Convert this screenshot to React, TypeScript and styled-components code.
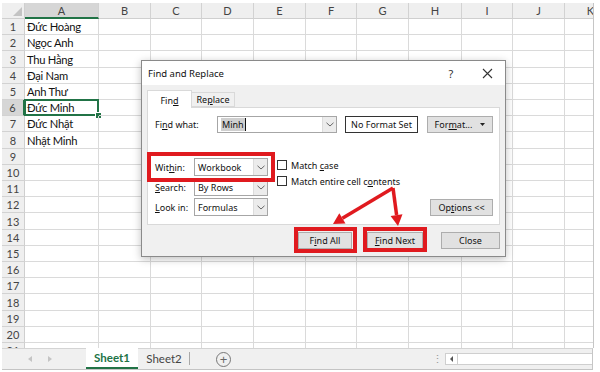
import React from "react";
import styled, { createGlobalStyle } from "styled-components";

const Global = createGlobalStyle`
  html, body { margin: 0; padding: 0; background: #fff; }
  body { font-family: "Lato", "Liberation Sans", sans-serif; }
  #root { width: 600px; height: 372px; }
`;

const COLS = [
  { l: "A", w: 74 }, { l: "B", w: 52 }, { l: "C", w: 51 }, { l: "D", w: 52 },
  { l: "E", w: 52 }, { l: "F", w: 51 }, { l: "G", w: 52 }, { l: "H", w: 53 },
  { l: "I", w: 51 }, { l: "J", w: 52 }, { l: "K", w: 52 },
];
const NAMES = ["Đức Hoàng", "Ngọc Anh", "Thu Hằng", "Đại Nam", "Anh Thư", "Đức Minh", "Đức Nhật", "Nhật Minh"];
const ROWS = 21;
const ACTIVE_ROW = 6;
const rowHeights = Array.from({ length: ROWS }, (_, i) =>
  Math.round(19 + 16.2 * (i + 1)) - Math.round(19 + 16.2 * i)
);

const RED = "#e01a1f";
const GREEN = "#217346";
const DFONT = `"Noto Sans", "Liberation Sans", sans-serif`;

const Page = styled.div`
  position: relative;
  width: 600px;
  height: 372px;
  overflow: hidden;
  background: #fff;
  display: flex;
  flex-direction: column;
`;

const SheetArea = styled.div`
  margin: 3px 0 0 2px;
  width: 591px;
  height: 345px;
  overflow: hidden;
  border-right: 1px solid #c6c6c6;
`;

const Grid = styled.div<{ $cols: string; $rows: string }>`
  display: grid;
  grid-template-columns: ${(p) => p.$cols};
  grid-template-rows: ${(p) => p.$rows};
  width: max-content;
`;

const Corner = styled.div`
  position: relative;
  background: #efefef;
  border-right: 1px solid #cfcfcf;
  border-bottom: 1px solid #cfcfcf;
  box-sizing: border-box;
  &::after {
    content: "";
    position: absolute;
    right: 2px;
    bottom: 2px;
    border-left: 9px solid transparent;
    border-bottom: 9px solid #c3c3c3;
  }
`;

const ColHead = styled.div<{ $sel?: boolean }>`
  box-sizing: border-box;
  background: ${(p) => (p.$sel ? "#d6d6d6" : "#efefef")};
  border-right: 1px solid #d2d2d2;
  border-bottom: ${(p) => (p.$sel ? `2px solid ${GREEN}` : "1px solid #cfcfcf")};
  color: #444;
  font-size: 11px;
  display: flex;
  align-items: center;
  justify-content: center;
  white-space: nowrap;
`;

const RowHead = styled.div<{ $sel?: boolean }>`
  box-sizing: border-box;
  background: ${(p) => (p.$sel ? "#d6d6d6" : "#efefef")};
  border-right: ${(p) => (p.$sel ? `2px solid ${GREEN}` : "1px solid #cfcfcf")};
  border-bottom: 1px solid #d2d2d2;
  color: #444;
  font-size: 11px;
  display: flex;
  align-items: center;
  justify-content: center;
`;

const Cell = styled.div<{ $active?: boolean }>`
  position: relative;
  box-sizing: border-box;
  border-right: 1px solid #dadada;
  border-bottom: 1px solid #dadada;
  color: #111;
  font-size: 11.2px;
  letter-spacing: -0.25px;
  padding-left: 2px;
  display: flex;
  align-items: center;
  white-space: nowrap;
  ${(p) =>
    p.$active
      ? `
    &::before {
      content: "";
      position: absolute;
      left: -1px; top: -1px; right: -1px; bottom: -1px;
      border: 2px solid ${GREEN};
    }
    &::after {
      content: "";
      position: absolute;
      right: -4px; bottom: -4px;
      width: 5px; height: 5px;
      background: ${GREEN};
      border: 1px solid #fff;
    }
  `
      : ""}
`;

const TabBar = styled.div`
  margin-left: 2px;
  width: 591px;
  height: 22px;
  box-sizing: border-box;
  background: #f0f0f0;
  border-top: 1px solid #d4d4d4;
  border-bottom: 1px solid #c4c4c4;
  border-right: 1px solid #c6c6c6;
  display: flex;
  align-items: stretch;
  font-family: "Lato", "Liberation Sans", sans-serif;
`;

const NavArea = styled.div`
  width: 84px;
  display: flex;
  align-items: center;
  gap: 16px;
  padding-left: 26px;
  box-sizing: border-box;
`;

const NavArrow = styled.span<{ $dir: "l" | "r" }>`
  width: 0;
  height: 0;
  border-top: 3px solid transparent;
  border-bottom: 3px solid transparent;
  ${(p) => (p.$dir === "l" ? "border-right: 4px solid #c4c4c4;" : "border-left: 4px solid #c4c4c4;")}
`;

const SheetTab = styled.div<{ $active?: boolean; $sep?: boolean }>`
  width: 52px;
  box-sizing: border-box;
  display: flex;
  align-items: center;
  justify-content: center;
  font-size: 11.5px;
  margin-top: -1px;
  color: ${(p) => (p.$active ? GREEN : "#444")};
  font-weight: ${(p) => (p.$active ? 700 : 400)};
  background: ${(p) => (p.$active ? "#fff" : "transparent")};
  border-bottom: ${(p) => (p.$active ? `2px solid ${GREEN}` : "none")};
  position: relative;
  ${(p) =>
    p.$sep
      ? `&::after { content: ""; position: absolute; right: 0; top: 4px; bottom: 4px; border-right: 1px solid #a8a8a8; }`
      : ""}
`;

const AddSheet = styled.div`
  margin: 3px 0 0 26px;
  width: 13px;
  height: 13px;
  border: 1px solid #777;
  border-radius: 50%;
  color: #666;
  font-size: 13px;
  line-height: 13px;
  text-align: center;
  font-family: "Liberation Sans", sans-serif;
`;

const Spacer = styled.div`
  flex: 1;
`;

const Dots = styled.div`
  width: 6px;
  color: #999;
  font-size: 11px;
  display: flex;
  align-items: center;
  margin-right: 7px;
`;

const ScrollTrack = styled.div`
  align-self: center;
  width: 147px;
  height: 12px;
  box-sizing: border-box;
  background: #fff;
  border: 1px solid #cfcfcf;
  border-right: none;
  display: flex;
`;

const ScrollBtn = styled.div`
  width: 11px;
  border-right: 1px solid #cfcfcf;
  display: flex;
  align-items: center;
  justify-content: center;
  &::before {
    content: "";
    border-top: 3px solid transparent;
    border-bottom: 3px solid transparent;
    border-right: 3px solid #555;
  }
`;

/* ---------- Dialog ---------- */

const Dialog = styled.div`
  position: absolute;
  left: 141px;
  top: 60px;
  width: 365px;
  height: 197px;
  box-sizing: border-box;
  border: 1px solid #8a8a8a;
  background: #f0f0f0;
  box-shadow: 0 2px 8px rgba(0, 0, 0, 0.25);
  font-family: ${DFONT};
  font-size: 9px;
  color: #111;
  display: flex;
  flex-direction: column;
`;

const TitleBar = styled.div`
  height: 24px;
  background: #fff;
  display: flex;
  align-items: center;
  padding: 0 11px 0 6px;
  font-size: 9.5px;
`;

const TitleText = styled.div`
  flex: 1;
  color: #111;
`;

const HelpBtn = styled.div`
  width: 10px;
  text-align: center;
  font-size: 11px;
  color: #333;
  margin-right: 24px;
`;

const CloseX = styled.div`
  width: 14px;
  height: 14px;
  display: flex;
  align-items: center;
  justify-content: center;
`;

const Body = styled.div`
  padding: 5px 5px 0 5px;
  display: flex;
  flex-direction: column;
`;

const Tabs = styled.div`
  display: flex;
  align-items: flex-end;
  height: 18px;
  margin-bottom: -1px;
  position: relative;
  z-index: 1;
`;

const Tab = styled.div<{ $active?: boolean }>`
  box-sizing: border-box;
  height: ${(p) => (p.$active ? "18px" : "15px")};
  width: ${(p) => (p.$active ? "45px" : "43px")};
  margin-bottom: ${(p) => (p.$active ? "0" : "1px")};
  background: ${(p) => (p.$active ? "#fff" : "#f0f0f0")};
  border: 1px solid #d9d9d9;
  border-bottom: ${(p) => (p.$active ? "none" : "1px solid #d9d9d9")};
  ${(p) => (p.$active ? "" : "border-left: none;")}
  display: flex;
  align-items: center;
  justify-content: center;
  padding-top: ${(p) => (p.$active ? "1px" : "0")};
`;

const Panel = styled.div`
  background: #fff;
  border: 1px solid #d9d9d9;
  padding: 8px 6px 8px 7px;
  display: flex;
  flex-direction: column;
`;

const FindRow = styled.div`
  display: flex;
  align-items: center;
  height: 16px;
`;

const Label = styled.div<{ $w: number }>`
  width: ${(p) => p.$w}px;
  flex: none;
  white-space: nowrap;
`;

const Combo = styled.div<{ $w: number; $h: number }>`
  width: ${(p) => p.$w}px;
  height: ${(p) => p.$h}px;
  box-sizing: border-box;
  flex: none;
  border: 1px solid #a6a6a6;
  background: #fff;
  display: flex;
  align-items: stretch;
`;

const ComboText = styled.div`
  flex: 1;
  display: flex;
  align-items: center;
  padding-left: 3px;
  white-space: nowrap;
`;

const Selected = styled.span`
  background: #cfcfcf;
  padding: 0 1px;
  border-right: 1px solid #111;
`;

const DropBtn = styled.div`
  width: 13px;
  background: #ececec;
  border-left: 1px solid #dcdcdc;
  display: flex;
  align-items: center;
  justify-content: center;
`;

const FormatBox = styled.div`
  width: 73px;
  height: 17px;
  box-sizing: border-box;
  margin-left: 8px;
  border: 1px solid #333;
  background: #fff;
  display: flex;
  align-items: center;
  justify-content: center;
  white-space: nowrap;
`;

const Button = styled.div<{ $w: number; $ml?: number }>`
  width: ${(p) => p.$w}px;
  height: 17px;
  box-sizing: border-box;
  flex: none;
  margin-left: ${(p) => p.$ml ?? 0}px;
  background: #e1e1e1;
  border: 1px solid #adadad;
  display: flex;
  align-items: center;
  justify-content: center;
  white-space: nowrap;
  gap: 8px;
`;

const Lower = styled.div`
  margin-top: 26px;
  height: 58px;
  display: flex;
  align-items: flex-start;
`;

const OptGrid = styled.div`
  display: grid;
  grid-template-columns: 39px 74px;
  grid-auto-rows: 18px;
  row-gap: 2px;
  align-items: center;
`;

const Checks = styled.div`
  margin-left: 9px;
  padding-top: 2px;
  display: flex;
  flex-direction: column;
  gap: 6px;
`;

const CheckRow = styled.div`
  display: flex;
  align-items: center;
  gap: 4px;
  height: 10px;
  white-space: nowrap;
`;

const Box = styled.div`
  width: 10px;
  height: 10px;
  box-sizing: border-box;
  border: 1px solid #333;
  background: #fff;
`;

const OptionsWrap = styled.div`
  margin-left: auto;
  align-self: flex-end;
`;

const Footer = styled.div`
  margin-top: 7px;
  display: flex;
  justify-content: flex-end;
`;

const RedBox = styled.div<{ $l: number; $t: number; $w: number; $h: number }>`
  position: absolute;
  left: ${(p) => p.$l}px;
  top: ${(p) => p.$t}px;
  width: ${(p) => p.$w}px;
  height: ${(p) => p.$h}px;
  box-sizing: border-box;
  border: 4px solid ${RED};
  pointer-events: none;
`;

const ArrowLayer = styled.svg`
  position: absolute;
  left: 0;
  top: 0;
  overflow: visible;
  pointer-events: none;
`;

const Chevron = () => (
  <svg width="8" height="5" viewBox="0 0 8 5">
    <polyline points="0.5,0.8 4,4 7.5,0.8" fill="none" stroke="#666" strokeWidth="1" />
  </svg>
);

const Select: React.FC<{ value: string }> = ({ value }) => (
  <Combo $w={74} $h={18}>
    <ComboText>{value}</ComboText>
    <DropBtn>
      <Chevron />
    </DropBtn>
  </Combo>
);

export default function App() {
  const colTemplate = ["23px", ...COLS.map((c) => `${c.w}px`)].join(" ");
  const rowTemplate = ["16px", ...rowHeights.map((h) => `${h}px`)].join(" ");

  return (
    <Page>
      <Global />
      <SheetArea>
        <Grid $cols={colTemplate} $rows={rowTemplate}>
          <Corner />
          {COLS.map((c) => (
            <ColHead key={c.l} $sel={c.l === "A"}>
              {c.l}
            </ColHead>
          ))}
          {Array.from({ length: ROWS }, (_, r) => (
            <React.Fragment key={r}>
              <RowHead $sel={r + 1 === ACTIVE_ROW}>{r + 1}</RowHead>
              {COLS.map((c, ci) => (
                <Cell key={c.l} $active={ci === 0 && r + 1 === ACTIVE_ROW}>
                  {ci === 0 ? NAMES[r] ?? "" : ""}
                </Cell>
              ))}
            </React.Fragment>
          ))}
        </Grid>
      </SheetArea>

      <TabBar>
        <NavArea>
          <NavArrow $dir="l" />
          <NavArrow $dir="r" />
        </NavArea>
        <SheetTab $active>Sheet1</SheetTab>
        <SheetTab $sep>Sheet2</SheetTab>
        <AddSheet>+</AddSheet>
        <Spacer />
        <Dots>⋮</Dots>
        <ScrollTrack>
          <ScrollBtn />
        </ScrollTrack>
      </TabBar>

      <Dialog>
        <TitleBar>
          <TitleText>Find and Replace</TitleText>
          <HelpBtn>?</HelpBtn>
          <CloseX>
            <svg width="11" height="11" viewBox="0 0 11 11">
              <path d="M1 1 L10 10 M10 1 L1 10" stroke="#333" strokeWidth="1.1" />
            </svg>
          </CloseX>
        </TitleBar>
        <Body>
          <Tabs>
            <Tab $active>
              Fin<u>d</u>
            </Tab>
            <Tab>
              Re<u>p</u>lace
            </Tab>
          </Tabs>
          <Panel>
            <FindRow>
              <Label $w={62}>
                Fi<u>n</u>d what:
              </Label>
              <Combo $w={120} $h={17}>
                <ComboText>
                  <Selected>Minh</Selected>
                </ComboText>
                <DropBtn>
                  <Chevron />
                </DropBtn>
              </Combo>
              <FormatBox>No Format Set</FormatBox>
              <Button $w={66} $ml={9}>
                <span>
                  For<u>m</u>at...
                </span>
                <svg width="5" height="3" viewBox="0 0 5 3">
                  <polygon points="0,0 5,0 2.5,3" fill="#222" />
                </svg>
              </Button>
            </FindRow>
            <Lower>
              <OptGrid>
                <Label $w={39}>
                  Wit<u>h</u>in:
                </Label>
                <Select value="Workbook" />
                <Label $w={39}>
                  <u>S</u>earch:
                </Label>
                <Select value="By Rows" />
                <Label $w={39}>
                  <u>L</u>ook in:
                </Label>
                <Select value="Formulas" />
              </OptGrid>
              <Checks>
                <CheckRow>
                  <Box />
                  <span>
                    Match <u>c</u>ase
                  </span>
                </CheckRow>
                <CheckRow>
                  <Box />
                  <span>
                    Match entire cell c<u>o</u>ntents
                  </span>
                </CheckRow>
              </Checks>
              <OptionsWrap>
                <Button $w={63}>
                  <span>
                    Op<u>t</u>ions &lt;&lt;
                  </span>
                </Button>
              </OptionsWrap>
            </Lower>
          </Panel>
          <Footer>
            <Button $w={54}>
              <span>
                F<u>i</u>nd All
              </span>
            </Button>
            <Button $w={56} $ml={15}>
              <span>
                <u>F</u>ind Next
              </span>
            </Button>
            <Button $w={59} $ml={18}>
              Close
            </Button>
          </Footer>
        </Body>

        <RedBox $l={5} $t={91} $w={128} $h={30} />
        <RedBox $l={152} $t={166} $w={63} $h={26} />
        <RedBox $l={221} $t={166} $w={64} $h={25} />

        <ArrowLayer width="363" height="195" viewBox="0 0 363 195">
          <line x1="251" y1="127" x2="200.4" y2="157.3" stroke={RED} strokeWidth="3.5" />
          <polygon points="191,163 203.5,162.5 197.3,152.2" fill={RED} />
          <line x1="251" y1="127" x2="254.6" y2="154.1" stroke={RED} strokeWidth="3.5" />
          <polygon points="256,165 260.5,153.3 248.6,154.9" fill={RED} />
        </ArrowLayer>
      </Dialog>
    </Page>
  );
}
